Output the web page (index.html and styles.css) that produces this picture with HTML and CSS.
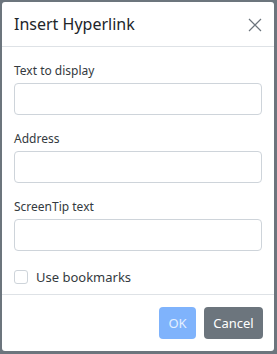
FILE: index.html
```html
<!doctype html>
<html lang="en">
<head>
	<meta charset="UTF-8">
	<title>Insert Hyperlink</title>
	<link rel="stylesheet" href="styles.css">
</head>
<body>
	<div class="modal">
		<div class="modal-header">
			<h5 class="modal-title">Insert Hyperlink</h5>
			<span class="close">
				<svg width="14" height="14" viewBox="0 0 14 14"><path d="M1 1L13 13M13 1L1 13" stroke="#6c757d" stroke-width="1.2" fill="none"/></svg>
			</span>
		</div>
		<div class="modal-body">
			<div class="item">
				<label for="text">Text to display</label>
				<input type="text" id="text">
			</div>
			<div class="item">
				<label for="address">Address</label>
				<input type="text" id="address">
			</div>
			<div class="item">
				<label for="tip">ScreenTip text</label>
				<input type="text" id="tip">
			</div>
			<div class="check">
				<span class="box"></span>
				<span>Use bookmarks</span>
			</div>
		</div>
		<div class="modal-footer">
			<button class="btn btn-ok">OK</button>
			<button class="btn btn-cancel">Cancel</button>
		</div>
	</div>
</body>
</html>
```
FILE: styles.css
```css
html, body{ margin: 0; height: 100%;}
body{ background: #6c757d; font-family: "Noto Sans", "Open Sans", sans-serif; color: #212529; padding: 2px 3px 3px 2px; box-sizing: border-box;}
.modal{ background: #fff; height: 349px; border-radius: 3px; display: flex; flex-direction: column;}
.modal-header{ height: 44px; border-bottom: 1px solid #dee2e6; display: flex; align-items: center; justify-content: space-between; padding: 0 12px 0 12px;}
.modal-title{ margin: 0; font-size: 16px; font-weight: 400; color: #212529;}
.close{ display: flex; padding-top: 2px;}
.modal-body{ padding: 15px 12px 0 12px; flex: 1;}
.item{ margin-bottom: 15px;}
.item label{ display: block; font-size: 12px; color: #343a40; line-height: 18px; margin-bottom: 3px;}
.item input{ display: block; width: 100%; box-sizing: border-box; height: 32px; border: 1px solid #ced4da; border-radius: 4px; margin: 0;}
.check{ display: flex; align-items: center; gap: 8px; font-size: 13px; color: #343a40; margin-top: 17px;}
.check .box{ width: 12px; height: 12px; border: 1px solid #ced4da; border-radius: 3px;}
.modal-footer{ border-top: 1px solid #dee2e6; height: 56px; display: flex; align-items: center; justify-content: flex-end; gap: 8px; padding: 0 11px 0 0;}
.btn{ font-family: inherit; font-size: 13px; height: 32px; border: none; border-radius: 4px; color: #fff; padding: 0 8px; margin: 0;}
.btn-ok{ background: #7fb3fc; color: #e4efff; width: 37px;}
.btn-cancel{ background: #6c757d; width: 59px;}
```
